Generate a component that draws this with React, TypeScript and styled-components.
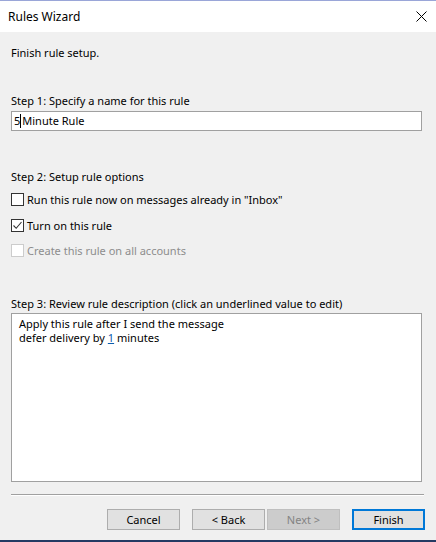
import React from "react";
import styled, { createGlobalStyle } from "styled-components";

const Global = createGlobalStyle`
  html, body { margin: 0; padding: 0; background: #f0f0f0; }
  body { font-family: "Noto Sans", "Open Sans", sans-serif; font-size: 11px; color: #000; }
  * { box-sizing: border-box; }
`;

const Window = styled.div`
  width: 436px;
  height: 542px;
  display: flex;
  flex-direction: column;
  background: #f0f0f0;
  border-top: 1px solid #9aa6d8;
  border-bottom: 2px solid #243a63;
  overflow: hidden;
`;

const TitleBar = styled.div`
  height: 31px;
  background: #fff;
  display: flex;
  align-items: center;
  justify-content: space-between;
  padding: 0 9px 0 8px;
  font-size: 12px;
`;

const Close = styled.svg`
  width: 11px;
  height: 11px;
`;

const Body = styled.div`
  flex: 1;
  display: flex;
  flex-direction: column;
  padding: 0 11px 0 11px;
`;

const Label = styled.div<{ $top: number }>`
  margin-top: ${(p) => p.$top}px;
  line-height: 16px;
  height: 16px;
  white-space: nowrap;
`;

const TextInput = styled.div`
  margin-top: 2px;
  height: 20px;
  width: 411px;
  background: #fff;
  border: 1px solid #a0a0a0;
  display: flex;
  align-items: center;
  padding-left: 2px;
  line-height: 16px;
`;

const Caret = styled.span`
  display: inline-block;
  width: 1px;
  height: 14px;
  background: #000;
  margin: 0 1px 0 0;
`;

const CheckRow = styled.div<{ $top: number; $disabled?: boolean }>`
  margin-top: ${(p) => p.$top}px;
  display: flex;
  align-items: center;
  gap: 3px;
  height: 16px;
  color: ${(p) => (p.$disabled ? "#8d8d8d" : "#000")};
  white-space: nowrap;
`;

const Box = styled.span<{ $disabled?: boolean }>`
  width: 13px;
  height: 13px;
  border: 1px solid ${(p) => (p.$disabled ? "#cccccc" : "#333333")};
  background: #fff;
  display: flex;
  align-items: center;
  justify-content: center;
  flex: none;
`;

const Description = styled.div`
  margin-top: 1px;
  width: 411px;
  height: 169px;
  background: #fff;
  border: 1px solid #a0a0a0;
  padding: 3px 7px;
  line-height: 14px;
`;

const Link = styled.span`
  color: #0b5cad;
  text-decoration: underline;
`;

const Separator = styled.div`
  margin-top: 12px;
  width: 413px;
  height: 1px;
  background: #a0a0a0;
  border-bottom: 1px solid #fff;
  box-sizing: content-box;
`;

const ButtonRow = styled.div`
  margin-top: 13px;
  display: flex;
  justify-content: flex-end;
  width: 414px;
`;

const Button = styled.div<{ $gap?: number; $variant?: "default" | "disabled" | "primary" }>`
  width: 73px;
  height: 21px;
  margin-left: ${(p) => p.$gap ?? 0}px;
  display: flex;
  align-items: center;
  justify-content: center;
  background: ${(p) => (p.$variant === "disabled" ? "#cccccc" : "#e1e1e1")};
  border: ${(p) =>
    p.$variant === "primary"
      ? "2px solid #0078d7"
      : p.$variant === "disabled"
      ? "1px solid #bfbfbf"
      : "1px solid #adadad"};
  color: ${(p) => (p.$variant === "disabled" ? "#838383" : "#000")};
  line-height: 16px;
`;

export default function App() {
  return (
    <>
      <Global />
      <Window>
        <TitleBar>
          <span>Rules Wizard</span>
          <Close viewBox="0 0 11 11">
            <path d="M0.5 0.5 L10.5 10.5 M10.5 0.5 L0.5 10.5" stroke="#000" strokeWidth="1" />
          </Close>
        </TitleBar>
        <Body>
          <Label $top={13}>Finish rule setup.</Label>
          <Label $top={32}>Step 1: Specify a name for this rule</Label>
          <TextInput>
            5<Caret />Minute Rule
          </TextInput>
          <Label $top={38}>Step 2: Setup rule options</Label>
          <CheckRow $top={6}>
            <Box />
            Run this rule now on messages already in "Inbox"
          </CheckRow>
          <CheckRow $top={10}>
            <Box>
              <svg width="11" height="11" viewBox="0 0 11 11">
                <path d="M1.5 5.5 L4.2 8.3 L9.5 2" fill="none" stroke="#333" strokeWidth="1.1" />
              </svg>
            </Box>
            Turn on this rule
          </CheckRow>
          <CheckRow $top={9} $disabled>
            <Box $disabled />
            Create this rule on all accounts
          </CheckRow>
          <Label $top={38}>Step 3: Review rule description (click an underlined value to edit)</Label>
          <Description>
            <div>Apply this rule after I send the message</div>
            <div>
              defer delivery by <Link>1</Link> minutes
            </div>
          </Description>
          <Separator />
          <ButtonRow>
            <Button>Cancel</Button>
            <Button $gap={12}>&lt; Back</Button>
            <Button $gap={2} $variant="disabled">Next &gt;</Button>
            <Button $gap={12} $variant="primary">Finish</Button>
          </ButtonRow>
        </Body>
      </Window>
    </>
  );
}
